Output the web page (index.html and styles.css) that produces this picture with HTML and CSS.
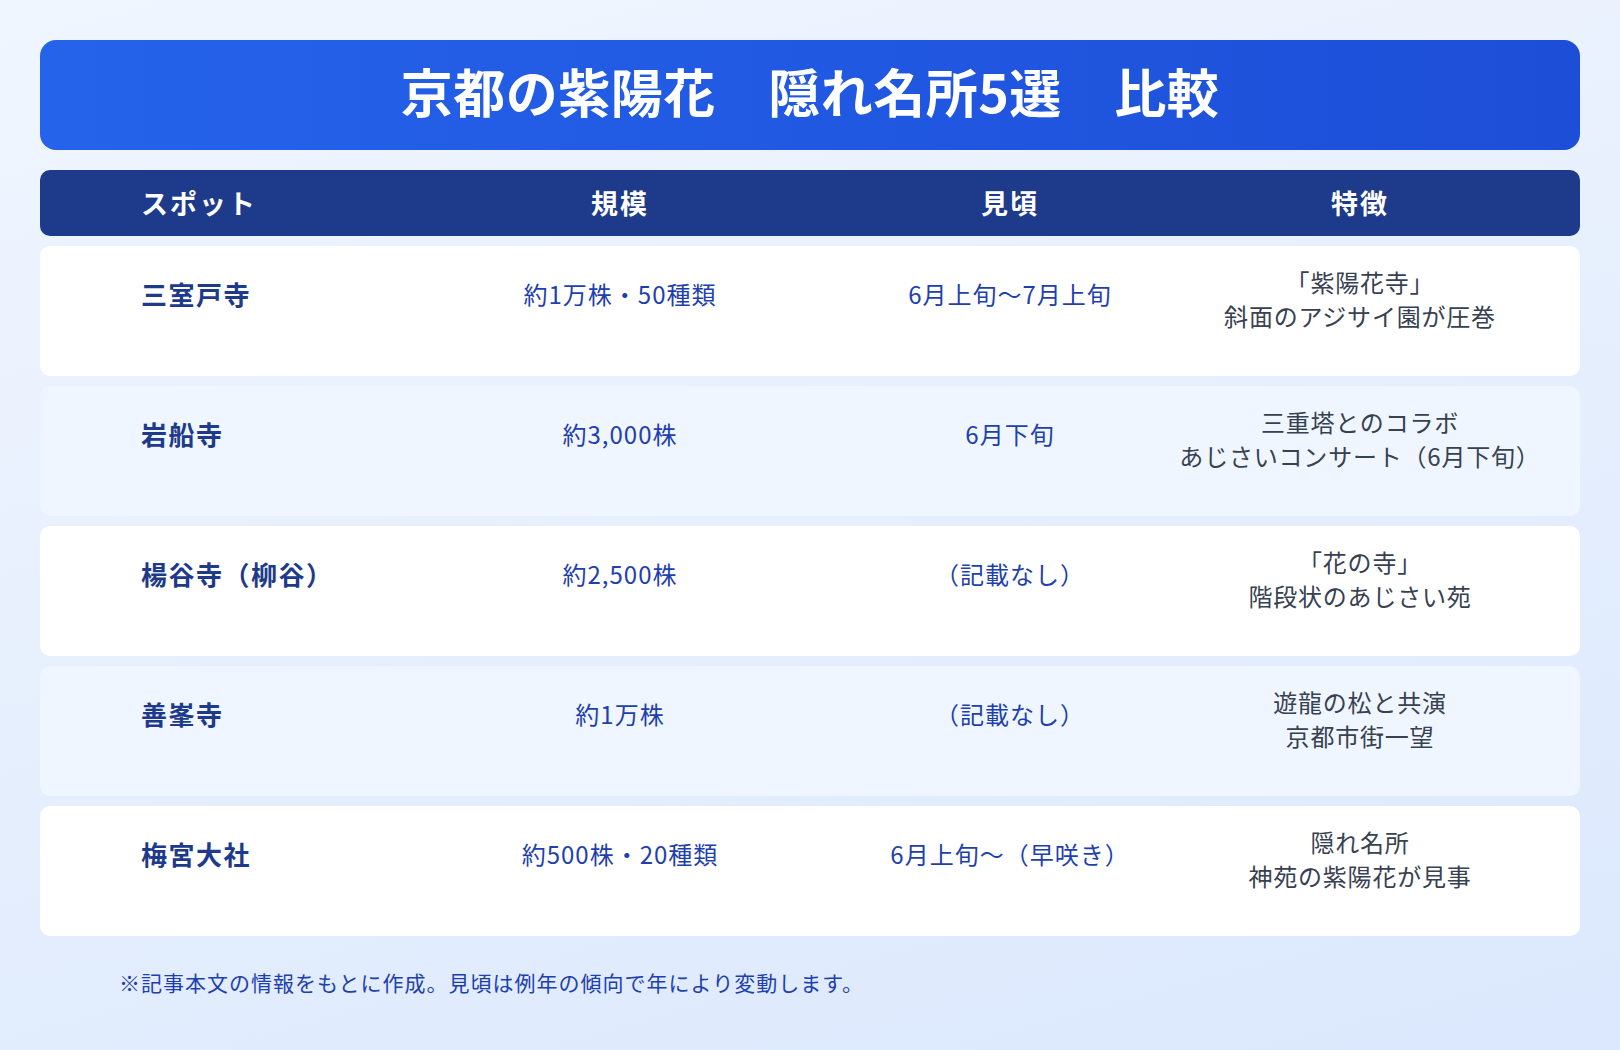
FILE: index.html
```html
<!DOCTYPE html>
<html lang="ja">
<head>
<meta charset="utf-8">
<title>京都の紫陽花　隠れ名所5選　比較</title>
<link rel="stylesheet" href="styles.css">
</head>
<body>
<main class="page">
  <header class="title-bar">
    <h1 class="title">京都の紫陽花　隠れ名所5選　比較</h1>
  </header>

  <div class="table">
    <div class="head">
      <div class="hcell hcell-left">スポット</div>
      <div class="hcell">規模</div>
      <div class="hcell">見頃</div>
      <div class="hcell">特徴</div>
    </div>

    <div class="row">
      <div class="cell spot">三室戸寺</div>
      <div class="cell val">約1万株・50種類</div>
      <div class="cell val">6月上旬〜7月上旬</div>
      <div class="cell note">「紫陽花寺」<br>斜面のアジサイ園が圧巻</div>
    </div>

    <div class="row row-alt">
      <div class="cell spot">岩船寺</div>
      <div class="cell val">約3,000株</div>
      <div class="cell val">6月下旬</div>
      <div class="cell note">三重塔とのコラボ<br>あじさいコンサート（6月下旬）</div>
    </div>

    <div class="row">
      <div class="cell spot">楊谷寺（柳谷）</div>
      <div class="cell val">約2,500株</div>
      <div class="cell val">（記載なし）</div>
      <div class="cell note">「花の寺」<br>階段状のあじさい苑</div>
    </div>

    <div class="row row-alt">
      <div class="cell spot">善峯寺</div>
      <div class="cell val">約1万株</div>
      <div class="cell val">（記載なし）</div>
      <div class="cell note">遊龍の松と共演<br>京都市街一望</div>
    </div>

    <div class="row">
      <div class="cell spot">梅宮大社</div>
      <div class="cell val">約500株・20種類</div>
      <div class="cell val">6月上旬〜（早咲き）</div>
      <div class="cell note">隠れ名所<br>神苑の紫陽花が見事</div>
    </div>
  </div>

  <p class="footnote">※記事本文の情報をもとに作成。見頃は例年の傾向で年により変動します。</p>
</main>
</body>
</html>
```

FILE: styles.css
```css
* {
  box-sizing: border-box;
}

html, body {
  margin: 0;
  padding: 0;
}

body {
  width: 1620px;
  height: 1050px;
  overflow: hidden;
  font-family: "Noto Sans CJK JP", "Noto Sans", sans-serif;
  background: linear-gradient(165deg, #f0f6ff 0%, #e6effd 50%, #dbe8fd 100%);
}

.page {
  padding: 40px 40px 0 40px;
  display: flex;
  flex-direction: column;
}

.title-bar {
  height: 110px;
  border-radius: 16px;
  background: linear-gradient(90deg, #2563eb 0%, #1d4ed8 100%);
  display: flex;
  align-items: center;
  justify-content: center;
  padding-bottom: 8px;
}

.title {
  margin: 0;
  color: #ffffff;
  font-size: 52px;
  font-weight: 700;
  letter-spacing: 0.5px;
  line-height: 1;
}

.table {
  margin-top: 20px;
  display: flex;
  flex-direction: column;
  gap: 10px;
}

.head,
.row {
  display: grid;
  grid-template-columns: 239px 480px 300px 400px;
  padding-left: 101px;
  padding-right: 20px;
}

.head {
  height: 66px;
  border-radius: 10px;
  background: #1e3a8a;
  align-items: center;
}

.hcell {
  color: #ffffff;
  font-size: 27px;
  font-weight: 700;
  letter-spacing: 2px;
  text-align: center;
  line-height: 1.3;
}

.hcell-left {
  text-align: left;
}

.row {
  height: 130px;
  border-radius: 10px;
  background: #ffffff;
  padding-top: 19px;
  align-items: start;
}

.row-alt {
  background: #eff6ff;
}

.cell {
  line-height: 34px;
}

.spot {
  padding-top: 12px;
  color: #1e3a8a;
  font-size: 26px;
  font-weight: 700;
  letter-spacing: 1.5px;
}

.val {
  padding-top: 12px;
  color: #1e40af;
  font-size: 24px;
  letter-spacing: 1px;
  text-align: center;
}

.note {
  color: #374151;
  font-size: 24px;
  letter-spacing: 0.8px;
  text-align: center;
}

.footnote {
  margin: 31px 0 0 79px;
  color: #1e40af;
  font-size: 21px;
  letter-spacing: 1px;
  line-height: 30px;
}
```
